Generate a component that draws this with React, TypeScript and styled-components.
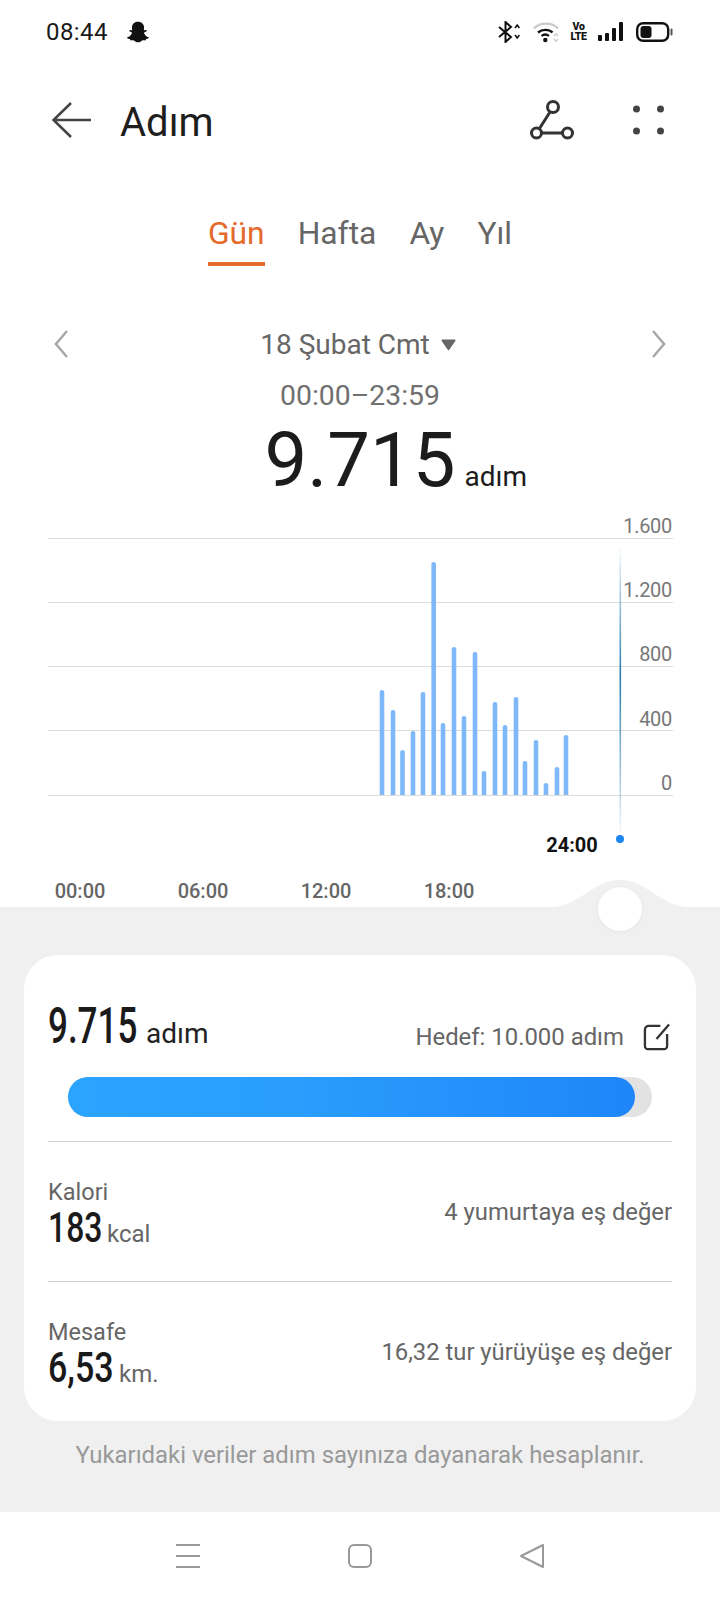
import React from "react";
import styled, { createGlobalStyle } from "styled-components";
import { FaSnapchatGhost } from "react-icons/fa";

const Global = createGlobalStyle`
  html, body { margin: 0; padding: 0; background: #fff; }
  body { font-family: Roboto, "Noto Sans", sans-serif; color: #1c1c1c; }
  * { box-sizing: border-box; }
`;

const Page = styled.div`
  width: 720px;
  height: 1600px;
  overflow: hidden;
  background: #fff;
  display: flex;
  flex-direction: column;
`;

const StatusBar = styled.div`
  height: 64px;
  padding: 0 47px 0 46px;
  display: flex;
  align-items: center;
  justify-content: space-between;
`;
const StatusLeft = styled.div`
  display: flex;
  align-items: center;
  gap: 19px;
`;
const Clock = styled.span`
  font-size: 24px;
  line-height: 28px;
  color: #1a1a1a;
  letter-spacing: 0.4px;
`;
const StatusRight = styled.div`
  display: flex;
  align-items: center;
`;
const VoLte = styled.span`
  width: 15px;
  margin: 0 12px 0 11px;
  display: flex;
  flex-direction: column;
  align-items: center;
  font-size: 10.5px;
  line-height: 10px;
  font-weight: 900;
  letter-spacing: -0.4px;
  color: #111;
`;

const Header = styled.div`
  height: 112px;
  padding: 0 56px 0 52px;
  display: flex;
  align-items: center;
`;
const Title = styled.h1`
  flex: 1;
  margin: 6px 0 0 29px;
  font-size: 40px;
  line-height: 46px;
  font-weight: 400;
  color: #1e1e1e;
`;
const HeaderActions = styled.div`
  display: flex;
  align-items: center;
  gap: 59px;
`;

const Tabs = styled.div`
  margin-top: 34px;
  height: 56px;
  display: flex;
  justify-content: center;
  gap: 33px;
`;
const Tab = styled.div<{ $active?: boolean }>`
  font-size: 31.8px;
  line-height: 46px;
  height: 56px;
  color: ${(p) => (p.$active ? "#e56b2c" : "#666")};
  border-bottom: 4px solid ${(p) => (p.$active ? "#e56b2c" : "transparent")};
`;

const DateRow = styled.div`
  margin-top: 58px;
  height: 42px;
  padding: 0 54px;
  display: flex;
  align-items: center;
  justify-content: space-between;
`;
const DateChevron = styled.svg`
  margin-top: -2px;
`;
const DateLabel = styled.div`
  display: flex;
  align-items: center;
  gap: 11px;
  margin-right: 4px;
  font-size: 28px;
  line-height: 42px;
  color: #666;
`;
const TimeRange = styled.div`
  margin-top: 13px;
  text-align: center;
  font-size: 28.4px;
  line-height: 34px;
  color: #707070;
`;
const BigValue = styled.div`
  margin-top: 7px;
  height: 80px;
  display: grid;
  grid-template-columns: 1fr auto 1fr;
  align-items: baseline;
  column-gap: 9px;
  color: #1c1c1c;
`;
const BigNumber = styled.span`
  grid-column: 2;
  font-size: 76px;
  line-height: 80px;
`;
const BigUnit = styled.span`
  font-size: 28px;
`;

const ChartFrame = styled.svg`
  display: block;
  margin-top: 8px;
  flex: none;
`;

const Lower = styled.section`
  position: relative;
  height: 605px;
  flex: none;
  background: #f0f0f0;
  padding: 48px 24px 0;
`;
const Bump = styled.svg`
  position: absolute;
  left: 540px;
  top: -28px;
`;
const Knob = styled.div`
  position: absolute;
  left: 598px;
  top: -20px;
  width: 44px;
  height: 44px;
  border-radius: 50%;
  background: #fff;
  box-shadow: 0 1px 4px rgba(0, 0, 0, 0.05);
`;

const Card = styled.div`
  height: 466px;
  background: #fff;
  border-radius: 34px;
  padding: 0 24px;
`;
const GoalRow = styled.div`
  padding-top: 46px;
  height: 99px;
  display: flex;
  align-items: flex-start;
  justify-content: space-between;
`;
const Condensed = styled.span<{ $size: number; $width: number; $scale: number }>`
  display: inline-block;
  width: ${(p) => p.$width}px;
  font-size: ${(p) => p.$size}px;
  font-weight: 500;
  white-space: nowrap;
  color: #1a1a1a;
  transform: scaleX(${(p) => p.$scale});
  transform-origin: left center;
`;
const GoalValue = styled.div`
  display: flex;
  align-items: baseline;
  gap: 10px;
  line-height: 50px;
`;
const GoalUnit = styled.span`
  font-size: 28px;
  color: #222;
`;
const GoalTarget = styled.div`
  display: flex;
  align-items: center;
  gap: 19px;
  margin: 21px 2px 0 0;
  font-size: 23.9px;
  line-height: 30px;
  color: #666;
`;
const Track = styled.div`
  margin: 23px 20px 24px;
  height: 40px;
  border-radius: 20px;
  background: #e2e2e2;
`;
const TrackFill = styled.div`
  height: 100%;
  border-radius: 20px;
  background: linear-gradient(90deg, #2ba4ff 0%, #2a9dfd 40%, #1e86f8 100%);
`;
const MetricRow = styled.div`
  height: 140px;
  border-top: 1px solid #cfcfcf;
  display: flex;
  justify-content: space-between;
  align-items: center;
`;
const MetricLeft = styled.div`
  display: flex;
  flex-direction: column;
  margin-top: 8px;
`;
const MetricLabel = styled.div`
  font-size: 23.5px;
  line-height: 30px;
  color: #666;
`;
const MetricValue = styled.div`
  display: flex;
  align-items: baseline;
  gap: 6px;
  line-height: 42px;
`;
const MetricUnit = styled.span`
  font-size: 24px;
  color: #666;
`;
const MetricNote = styled.div`
  font-size: 23.8px;
  line-height: 30px;
  color: #666;
`;
const Footnote = styled.p`
  margin: 19px 0 0;
  text-align: center;
  font-size: 23.9px;
  line-height: 30px;
  color: #999;
`;

const NavBar = styled.nav`
  flex: none;
  height: 88px;
  padding: 32px 176px 0;
  display: flex;
  justify-content: space-between;
  align-items: flex-start;
  background: #fff;
`;

const bars: [number, number][] = [
  [382, 690], [393, 710], [402.5, 750], [413, 731], [423, 692], [433.7, 562],
  [443, 723], [454, 647], [464, 716], [475, 652], [484, 771], [495, 702],
  [505, 725], [516, 697], [525, 761], [536, 740], [546, 783], [557, 767], [566, 735],
];
const OY = 508;
const gridY = [538, 602, 666, 730, 795];
const yLabels: [string, number][] = [["1.600", 526], ["1.200", 590], ["800", 654], ["400", 719], ["0", 783]];
const xLabels: [string, number][] = [["00:00", 80], ["06:00", 203], ["12:00", 326], ["18:00", 449]];

function Chart() {
  return (
    <ChartFrame width={720} height={399} viewBox={`0 ${OY} 720 399`}>
      <defs>
        <linearGradient id="cursor" x1="0" y1="0" x2="0" y2="1">
          <stop offset="0" stopColor="#2a7cad" stopOpacity="0" />
          <stop offset="0.15" stopColor="#2a7cad" stopOpacity="0.35" />
          <stop offset="0.45" stopColor="#2a7cad" />
          <stop offset="0.7" stopColor="#2a7cad" stopOpacity="0.6" />
          <stop offset="1" stopColor="#2a7cad" stopOpacity="0.05" />
        </linearGradient>
      </defs>
      {gridY.map((y) => (
        <line key={y} x1={48} x2={673} y1={y + 0.5} y2={y + 0.5} stroke="#dcdcdc" strokeWidth={1} />
      ))}
      {bars.map(([x, top]) => (
        <path
          key={x}
          d={`M${x - 2.3} 795 V${top + 2} Q${x - 2.3} ${top} ${x} ${top} Q${x + 2.3} ${top} ${x + 2.3} ${top + 2} V795 Z`}
          fill="#7fb8f8"
        />
      ))}
      <rect x={619.5} y={545} width={1.6} height={288} fill="url(#cursor)" />
      <circle cx={620} cy={839} r={4} fill="#1e86f0" />
      {yLabels.map(([t, y]) => (
        <text key={t} x={672} y={y + 7} textAnchor="end" fontSize={20} letterSpacing={-0.3} fill="#777" fontFamily="Roboto, sans-serif">
          {t}
        </text>
      ))}
      <text x={572} y={852} textAnchor="middle" fontSize={20} fontWeight={700} fill="#111" fontFamily="Roboto, sans-serif">
        24:00
      </text>
      {xLabels.map(([t, x]) => (
        <text key={t} x={x} y={898} textAnchor="middle" fontSize={20} fontWeight={500} fill="#666" fontFamily="Roboto, sans-serif">
          {t}
        </text>
      ))}
    </ChartFrame>
  );
}

export default function App() {
  return (
    <Page>
      <Global />
      <StatusBar>
        <StatusLeft>
          <Clock>08:44</Clock>
          <FaSnapchatGhost size={22} color="#111" />
        </StatusLeft>
        <StatusRight>
          <svg width={22} height={22} viewBox="0 0 22 22" fill="none" stroke="#111" strokeWidth={2}>
            <path d="M1 6l12 10-5.5 5V1L13 6 1 16" />
            <path d="M17 7l2.2-3 2.2 3M17 14l2.2 3 2.2-3" strokeWidth={1.6} />
          </svg>
          <svg width={27} height={22} viewBox="0 0 27 22" fill="none" style={{ marginLeft: 13 }}>
            <path d="M1 7.5C7 1 19 1 25 7.5" stroke="#c9c9c9" strokeWidth={2.4} />
            <path d="M5 11.5C9 8 16 8 19.5 11.5" stroke="#111" strokeWidth={2.4} />
            <path d="M8.5 15c2.5-2 5-2 7.5 0" stroke="#111" strokeWidth={2.2} />
            <circle cx={12.3} cy={19} r={2.2} fill="#111" />
            <path d="M21 15l2-2.4 2 2.4M21 18l2 2.4 2-2.4" stroke="#c9c9c9" strokeWidth={1.2} />
          </svg>
          <VoLte>
            <span>Vo</span>
            <span>LTE</span>
          </VoLte>
          <svg width={25} height={20} viewBox="0 0 25 20" fill="#111">
            <rect x={0} y={13} width={4} height={6} rx={1} />
            <rect x={7} y={11} width={4} height={8} rx={1} />
            <rect x={14} y={6} width={4} height={13} rx={1} />
            <rect x={21} y={0} width={4} height={19} rx={1} />
          </svg>
          <svg width={37} height={22} viewBox="0 0 37 22" style={{ marginLeft: 13 }}>
            <rect x={1.2} y={2.2} width={31} height={17.6} rx={6} fill="none" stroke="#111" strokeWidth={2.4} />
            <rect x={4.5} y={5} width={11} height={12} rx={3} fill="#111" />
            <rect x={34.5} y={7.5} width={2} height={7} rx={1} fill="#555" />
          </svg>
        </StatusRight>
      </StatusBar>

      <Header>
        <svg width={39} height={36} viewBox="0 0 39 36" fill="none" stroke="#444" strokeWidth={2.6}>
          <path d="M19 1L1.5 18 19 35M1.5 18H39" />
        </svg>
        <Title>Adım</Title>
        <HeaderActions>
          <svg width={44} height={40} viewBox="0 0 44 40" fill="none" stroke="#333" strokeWidth={3}>
            <circle cx={23} cy={7} r={5.5} />
            <circle cx={6.5} cy={33} r={5} />
            <circle cx={37.5} cy={33} r={5} />
            <path d="M20 12L9.5 28.5M11.5 33H32.5" />
          </svg>
          <svg width={31} height={30} viewBox="0 0 31 30" fill="#444">
            <circle cx={3.5} cy={4} r={3.5} />
            <circle cx={27.5} cy={4} r={3.5} />
            <circle cx={3.5} cy={26} r={3.5} />
            <circle cx={27.5} cy={26} r={3.5} />
          </svg>
        </HeaderActions>
      </Header>

      <Tabs>
        <Tab $active>Gün</Tab>
        <Tab>Hafta</Tab>
        <Tab>Ay</Tab>
        <Tab>Yıl</Tab>
      </Tabs>

      <DateRow>
        <DateChevron width={14} height={28} viewBox="0 0 14 28" fill="none" stroke="#aaa" strokeWidth={2.6}>
          <path d="M13 1L2 14l11 13" />
        </DateChevron>
        <DateLabel>
          18 Şubat Cmt
          <svg width={15} height={12} viewBox="0 0 16 12" fill="#666">
            <path d="M1.5 0h13a1 1 0 0 1 .8 1.6L8.8 11a1 1 0 0 1-1.6 0L.7 1.6A1 1 0 0 1 1.5 0z" />
          </svg>
        </DateLabel>
        <DateChevron width={14} height={28} viewBox="0 0 14 28" fill="none" stroke="#aaa" strokeWidth={2.6}>
          <path d="M1 1l11 13L1 27" />
        </DateChevron>
      </DateRow>
      <TimeRange>00:00–23:59</TimeRange>
      <BigValue>
        <BigNumber>9.715</BigNumber>
        <BigUnit>adım</BigUnit>
      </BigValue>

      <Chart />

      <Lower>
        <Bump width={160} height={29} viewBox="0 0 160 29">
          <path d="M8 28.5C40 28.5 52 1 80 1s40 27.5 72 27.5V29H8z" fill="#f0f0f0" />
        </Bump>
        <Knob />
        <Card>
          <GoalRow>
            <GoalValue>
              <Condensed $size={50} $width={88} $scale={0.7}>9.715</Condensed>
              <GoalUnit>adım</GoalUnit>
            </GoalValue>
            <GoalTarget>
              Hedef: 10.000 adım
              <svg width={27} height={28} viewBox="0 0 28 28" fill="none" stroke="#333" strokeWidth={2.4}>
                <path d="M18 2.5H6a4 4 0 0 0-4 4v17a3 3 0 0 0 3 3h17a3 3 0 0 0 3-3V11" />
                <path d="M27 1L14 16" />
              </svg>
            </GoalTarget>
          </GoalRow>
          <Track>
            <TrackFill style={{ width: `${(567 / 584) * 100}%` }} />
          </Track>
          <MetricRow>
            <MetricLeft>
              <MetricLabel>Kalori</MetricLabel>
              <MetricValue>
                <Condensed $size={42} $width={53} $scale={0.76}>183</Condensed>
                <MetricUnit>kcal</MetricUnit>
              </MetricValue>
            </MetricLeft>
            <MetricNote>4 yumurtaya eş değer</MetricNote>
          </MetricRow>
          <MetricRow>
            <MetricLeft>
              <MetricLabel>Mesafe</MetricLabel>
              <MetricValue>
                <Condensed $size={42} $width={65} $scale={0.81}>6,53</Condensed>
                <MetricUnit>km.</MetricUnit>
              </MetricValue>
            </MetricLeft>
            <MetricNote>16,32 tur yürüyüşe eş değer</MetricNote>
          </MetricRow>
        </Card>
        <Footnote>Yukarıdaki veriler adım sayınıza dayanarak hesaplanır.</Footnote>
      </Lower>

      <NavBar>
        <svg width={24} height={24} viewBox="0 0 24 24" stroke="#999" strokeWidth={2}>
          <path d="M0 1h24M0 12h24M0 23h24" />
        </svg>
        <svg width={24} height={24} viewBox="0 0 24 24" fill="none" stroke="#999" strokeWidth={2}>
          <rect x={1} y={1} width={22} height={22} rx={5} />
        </svg>
        <svg width={24} height={24} viewBox="0 0 24 24" fill="none" stroke="#999" strokeWidth={2} strokeLinejoin="round">
          <path d="M23 1v22L1 12z" />
        </svg>
      </NavBar>
    </Page>
  );
}
